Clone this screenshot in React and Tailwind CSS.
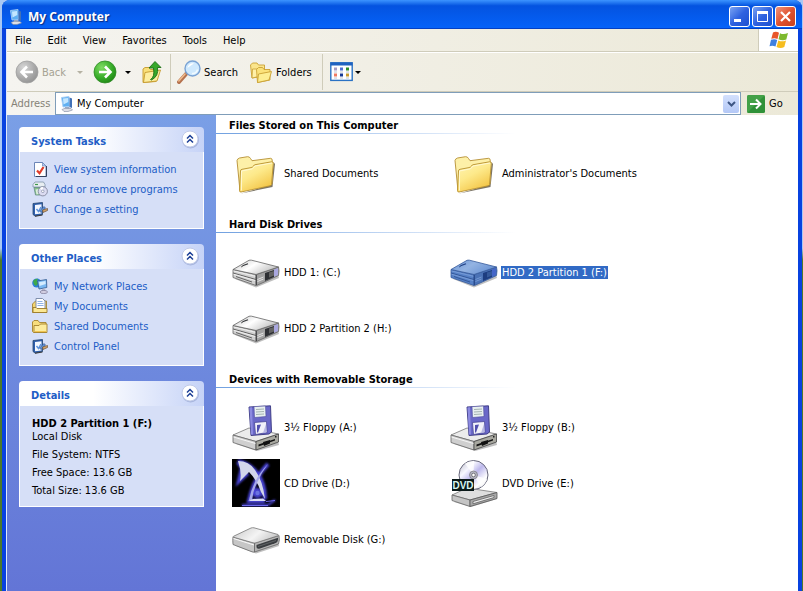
import { useState } from 'react';

const menus = ['File', 'Edit', 'View', 'Favorites', 'Tools', 'Help'];

const groups = [
    {
        title: 'Files Stored on This Computer',
        items: [
            { name: 'Shared Documents', icon: FolderIcon },
            { name: "Administrator's Documents", icon: FolderIcon },
        ],
    },
    {
        title: 'Hard Disk Drives',
        items: [
            { name: 'HDD 1: (C:)', icon: HardDriveIcon },
            { name: 'HDD 2 Partition 1 (F:)', icon: HardDriveIcon },
            { name: 'HDD 2 Partition 2 (H:)', icon: HardDriveIcon },
        ],
    },
    {
        title: 'Devices with Removable Storage',
        items: [
            { name: '3½ Floppy (A:)', icon: FloppyIcon },
            { name: '3½ Floppy (B:)', icon: FloppyIcon },
            { name: 'CD Drive (D:)', icon: CdIcon },
            { name: 'DVD Drive (E:)', icon: DvdIcon },
            { name: 'Removable Disk (G:)', icon: RemovableIcon },
        ],
    },
];

const tasks = [
    { name: 'View system information', icon: InfoIcon },
    { name: 'Add or remove programs', icon: ProgramsIcon },
    { name: 'Change a setting', icon: SettingIcon },
];

const places = [
    { name: 'My Network Places', icon: NetworkIcon },
    { name: 'My Documents', icon: DocumentsIcon },
    { name: 'Shared Documents', icon: SmallFolderIcon },
    { name: 'Control Panel', icon: SettingIcon },
];

/* ---------- 48px icons ---------- */

function FolderIcon() {
    return (
        <svg viewBox="0 0 48 48" className="size-12">
            <defs>
                <linearGradient id="fFront" x1="0" y1="0" x2="0.6" y2="1">
                    <stop offset="0" stopColor="#fff6b8" />
                    <stop offset="0.5" stopColor="#fde98a" />
                    <stop offset="1" stopColor="#f3c546" />
                </linearGradient>
            </defs>
            <path d="M9 44.500 40.500 38 43 15 41.500 13 40 35.500Z" fill="#5b5340" opacity="0.800" />
            <path d="M5 11.500Q5 10 7.500 9L15.500 7.700Q17.500 7.500 18.500 9.500L20 11.700 38.500 9.300Q40 9.300 40.200 11L40 35 8 42Z" fill="#fdf0a8" stroke="#b58f33" strokeWidth="0.9" />
            <path d="M8.500 22Q8.500 20.500 10 20.300L19 18.600Q20.500 18.300 21.500 17L22.500 15.800 39.500 12.800Q41.500 12.500 41.300 14.500L39.500 35.500Q39.400 36.500 38 36.800L9 43Q7.500 43.300 7.500 41.500Z" fill="url(#fFront)" stroke="#b8912f" strokeWidth="0.9" />
            <path d="M9.500 41.500V22L20.500 19.800 23 17 40 14" fill="none" stroke="#fffbe0" strokeWidth="0.8" />
        </svg>
    );
}

function HardDriveIcon({ selected }) {
    const c = selected
        ? { top: '#93b3e2', top2: '#6a93d4', left: '#5580c6', right: '#4a72b6', line: '#35599a', dark: '#1d3d80', tint: '#4566c8', shine: '#7fa2da' }
        : { top: '#ffffff', top2: '#c2c2c2', left: '#cfcfcf', right: '#a2a2a2', line: '#636363', dark: '#2e3034', tint: '#a9a7df', shine: '#f6f6f6' };
    const id = selected ? 'hddSel' : 'hdd';
    return (
        <svg viewBox="0 0 48 48" className="size-12">
            <defs>
                <linearGradient id={id} x1="0" y1="0" x2="1" y2="0.5">
                    <stop offset="0" stopColor={c.top2} />
                    <stop offset="0.5" stopColor={c.top} />
                    <stop offset="1" stopColor={c.top2} />
                </linearGradient>
            </defs>
            <path d="M3 31 24 39.500 47 30 46 26Z" fill="#000" opacity="0.25" />
            <path d="M1 21.500 24 26.500V37.500L1 29.500Z" fill={c.left} stroke={c.line} strokeWidth="0.8" />
            <path d="M24 26.500 46.500 19Q47.500 22 46.500 27.500L24.500 37.500Z" fill={c.right} stroke={c.line} strokeWidth="0.8" />
            <path d="M1 21.500 17 12.300Q18 12 19.500 12.200L46.500 19 24 26.500Z" fill={`url(#${id})`} stroke={c.line} strokeWidth="0.8" />
            <path d="M1 25 24 31.500" stroke={c.line} strokeWidth="1" />
            <path d="M4 28.500 20 34" stroke={c.line} strokeWidth="1" />
            <path d="M1.500 23 23.500 28.300M1.500 26.200 23.500 32.700" stroke={c.shine} strokeWidth="0.8" />
            <path d="M24.300 27V37" stroke={c.dark} strokeWidth="0.8" />
            <path d="M33 25 42 22V29L33 33Z" fill={c.dark} />
            <path d="M37 24.500 42 23V27.500L37 29.500Z" fill={c.line} />
            <path d="M42 21.500 46 20V27L42 28.800Z" fill={c.tint} />
            <path d="M25.500 31.500 31.500 29M25.500 33.500 31.500 31" stroke={c.shine} strokeWidth="0.8" />
            <path d="M10.500 17.800 16 15.800" stroke={c.dark} strokeWidth="1.200" />
            <path d="M9 19 11 18" stroke={c.line} strokeWidth="1" />
        </svg>
    );
}

function FloppyIcon() {
    return (
        <svg viewBox="0 0 48 48" className="size-12">
            <path d="M4 41 25 48 47 42 46 38Z" fill="#000" opacity="0.25" />
            <path d="M1 32 17 25 46.500 31 24 38.500Z" fill="#ececec" stroke="#777" strokeWidth="0.8" />
            <path d="M1 32 24 38.500V47L1 39.500Z" fill="#cfcfcf" stroke="#666" strokeWidth="0.8" />
            <path d="M24 38.500 46.500 31V39L24 47Z" fill="#a8a8a0" stroke="#444" strokeWidth="0.8" />
            <path d="M1.500 34 23.500 40.500" stroke="#fff" strokeWidth="0.8" />
            <path d="M26.500 41.500 43 36V37.500L26.500 43.500Z" fill="#111" />
            <path d="M31 39 38 37V40.500L32 43Z" fill="#111" />
            <rect x="43" y="33" width="1.500" height="1.500" fill="#222" />
            <path d="M17 4 38.500 2.800 39.500 29 37 31 19 32.500Z" fill="#6a68c8" stroke="#35347e" strokeWidth="0.9" />
            <path d="M17.500 4.500 20 4.300 21 31.500 19 31.500Z" fill="#8c8ae0" />
            <path d="M22 3.600 33.500 3 34 13.500 22.500 14.500Z" fill="#e8f0f0" stroke="#4c4a9c" strokeWidth="0.6" />
            <path d="M24 6.500 32 6M24 9 32 8.500M24 11.500 32 11" stroke="#9dabaa" strokeWidth="0.9" />
            <path d="M22.500 19.500 34.500 18.500 35 29.500 23.500 31.500Z" fill="#f1f1fa" stroke="#3d3c8e" strokeWidth="0.7" />
            <path d="M25 22 29 21.500 26 29.500 25 29.500Z" fill="#514fae" />
            <path d="M31 30 34 21 34.500 29.500Z" fill="#b8b8e4" />
        </svg>
    );
}

function CdIcon() {
    return (
        <svg viewBox="0 0 48 48" className="size-12">
            <defs>
                <filter id="cdGlow" x="-20%" y="-20%" width="140%" height="140%">
                    <feGaussianBlur stdDeviation="1.100" />
                </filter>
            </defs>
            <rect width="48" height="48" fill="#000" />
            <g fill="none" stroke="#4a44d8" strokeWidth="4" filter="url(#cdGlow)">
                <path d="M6 2Q18 5 25 14 33 25 33 40" />
                <path d="M6 3 10 9 7 22 16 14" />
                <path d="M36 5Q22 19 17 42H33" />
                <path d="M10 46H36L43 41" strokeWidth="2" />
                <circle cx="25.500" cy="34" r="3" />
            </g>
            <path d="M6 2Q17 2 23 11 31 22 33 40L29 33Q25 21 17 13L8 22Q10 14 6 2Z" fill="#d3d6ea" />
            <path d="M36 5Q28 13 23 23 19 31 17 41H20Q21 32 25 24 29 14 36 5Z" fill="#a5a8e8" />
            <path d="M16 42H34L31 39.500 21 40Z" fill="#dcdef4" />
            <path d="M10 46.500H36M34 42.500 43 41.500" stroke="#6c68ee" strokeWidth="1.200" />
            <circle cx="25.500" cy="34" r="2.200" fill="#6b72e2" />
        </svg>
    );
}

function DvdIcon() {
    return (
        <svg viewBox="0 0 48 48" className="size-12">
            <defs>
                <linearGradient id="disc" x1="0" y1="0" x2="1" y2="1">
                    <stop offset="0" stopColor="#b9b9c8" />
                    <stop offset="0.3" stopColor="#f7f7ff" />
                    <stop offset="0.5" stopColor="#bdb8ec" />
                    <stop offset="0.750" stopColor="#ffffff" />
                    <stop offset="1" stopColor="#a8a8b8" />
                </linearGradient>
            </defs>
            <path d="M4 43 21 48 47 40 46 36Z" fill="#000" opacity="0.25" />
            <path d="M2 36 17 29 47 33.500 20 41Z" fill="#dedede" stroke="#777" strokeWidth="0.8" />
            <path d="M2 36 20 41V47.500L2 41.500Z" fill="#c4c4c4" stroke="#666" strokeWidth="0.8" />
            <path d="M20 41 47 33.500V39.500L20 47.500Z" fill="#a8a8a8" stroke="#555" strokeWidth="0.8" />
            <path d="M23 42.500 44 36.500V38.500L23 44.800Z" fill="#eee" stroke="#555" strokeWidth="0.7" />
            <circle cx="23.500" cy="16" r="14.500" fill="url(#disc)" stroke="#66667a" strokeWidth="1" />
            <path d="M23.500 16 15 4.500A14 14 0 0 1 24 2Z" fill="#fff" opacity="0.8" />
            <path d="M23.500 16 37 20A14 14 0 0 1 31 28Z" fill="#fff" opacity="0.8" />
            <circle cx="23.500" cy="16" r="4" fill="#b4b4c4" stroke="#777" strokeWidth="0.7" />
            <circle cx="23.500" cy="16" r="1.800" fill="#fff" stroke="#555" strokeWidth="0.7" />
            <rect x="2" y="20" width="22" height="12" fill="#0a1818" />
            <text x="13" y="29.500" textAnchor="middle" fontFamily="Liberation Sans, sans-serif" fontWeight="700" fontSize="10" fill="#d7f5f0">DVD</text>
        </svg>
    );
}

function RemovableIcon() {
    return (
        <svg viewBox="0 0 48 48" className="size-12">
            <defs>
                <linearGradient id="rem" x1="0" y1="0" x2="1" y2="0.4">
                    <stop offset="0" stopColor="#c9c9c9" />
                    <stop offset="0.600" stopColor="#f4f4f4" />
                    <stop offset="1" stopColor="#cccccc" />
                </linearGradient>
            </defs>
            <path d="M4 31 24 38.500 47 31 46 27Z" fill="#000" opacity="0.25" />
            <path d="M1 22Q0.500 25 1 29.500L20 36.800Q21.500 37.200 22.500 37V28Z" fill="#c6c6c6" stroke="#666" strokeWidth="0.8" />
            <path d="M22.500 28 47 20.500Q48 25 46.500 29L22.500 37Z" fill="#b4b4b4" stroke="#666" strokeWidth="0.8" />
            <path d="M1.500 21.300 19 13Q20.500 12.500 22 12.800L46 19.500Q47 20.200 46 20.800L24 27.800Q22.500 28.200 21 27.800L1.500 22.200Q0.800 21.700 1.500 21.300Z" fill="url(#rem)" stroke="#777" strokeWidth="0.8" />
            <path d="M24.500 30 46 22.800Q46.500 27 43 28.300L28 33.500Q24.500 34.500 24.500 32Z" fill="#3a3d40" />
            <path d="M26 31.500 44 25.500" stroke="#6a6d70" strokeWidth="0.800" />
            <path d="M1.500 23.500 22 30" stroke="#fff" strokeWidth="0.9" />
        </svg>
    );
}

/* ---------- 16px icons ---------- */

function InfoIcon() {
    return (
        <svg viewBox="0 0 16 16" className="size-4">
            <path d="M2.500 1.500H10.500L14 5V15.500H2.500Z" fill="#fff" stroke="#6c86b8" />
            <path d="M14.500 5V15.500H4" stroke="#33415f" fill="none" />
            <path d="M10.500 1.500V5H14Z" fill="#b7cdf2" stroke="#6c86b8" strokeWidth="0.700" />
            <path d="M5 9.500 7.500 12.300 11.500 6" fill="none" stroke="#e03c2a" strokeWidth="2.200" />
        </svg>
    );
}

function ProgramsIcon() {
    return (
        <svg viewBox="0 0 16 16" className="size-4">
            <path d="M1 3.500 3 1H11.500L13 3.500V6H1Z" fill="#e8eef2" stroke="#7f93a8" strokeWidth="0.800" />
            <path d="M3 3.500H6" stroke="#3e9a4b" strokeWidth="1.200" />
            <path d="M2 6.500H8V14H3.500Z" fill="#86bf86" stroke="#648a86" strokeWidth="0.800" />
            <path d="M3.500 8.500 7 8V13L4.500 13.500Z" fill="#dbeedd" />
            <circle cx="10.800" cy="10.300" r="4.600" fill="#dcdcf2" stroke="#7a7f96" strokeWidth="0.800" />
            <path d="M10.800 10.300 8 7A4.500 4.500 0 0 1 11 6Z" fill="#fff" />
            <circle cx="10.800" cy="10.300" r="1.300" fill="#fff" stroke="#8088a5" strokeWidth="0.700" />
        </svg>
    );
}

function SettingIcon() {
    return (
        <svg viewBox="0 0 16 16" className="size-4">
            <path d="M1 2.500 10.500 1.500V13.500L3 15 1 13.500Z" fill="#2f5fae" stroke="#27466f" strokeWidth="0.800" />
            <path d="M3 4 9.500 3.300V12.500L3 13.300Z" fill="#f4f8ff" />
            <path d="M4.500 8 6.500 10.500 9 6" fill="none" stroke="#5d93dd" strokeWidth="1.500" />
            <path d="M7.500 10 12 5.500 13.500 7 9 11.500Z" fill="#5f93dc" stroke="#22447e" strokeWidth="0.600" />
            <path d="M10.500 9 15.500 7.500V9.500L11 11.500Z" fill="#d3a368" stroke="#69503a" strokeWidth="0.700" />
            <path d="M3 15.300 10.500 14" stroke="#3a3a3a" />
        </svg>
    );
}

function NetworkIcon() {
    return (
        <svg viewBox="0 0 16 16" className="size-4">
            <circle cx="4.800" cy="5" r="4.600" fill="#2c7fd8" />
            <path d="M1 3Q3 0.500 6 0.700L5 3 6.500 5 4 8 2 6.500Z" fill="#3fa94a" />
            <path d="M5.500 3 14.500 1.500 14.800 9.500 7 11Z" fill="#79b8f2" stroke="#31598f" strokeWidth="0.800" />
            <path d="M7 4.200 13.500 3 13.700 6 7.500 8Z" fill="#d4ecff" />
            <path d="M10 11 13 10.500 13.500 13H10Z" fill="#b9b9cc" />
            <ellipse cx="11.800" cy="14" rx="3.700" ry="1.600" fill="#d3cfe2" stroke="#7b7896" strokeWidth="0.700" />
        </svg>
    );
}

function DocumentsIcon() {
    return (
        <svg viewBox="0 0 16 16" className="size-4">
            <path d="M0.500 6 3.500 3H14.500V14.500H0.500Z" fill="#f4d56f" stroke="#9b7a28" strokeWidth="0.800" />
            <path d="M4 0.500H10.500L13 3V12H4Z" fill="#fff" stroke="#7484a4" strokeWidth="0.900" />
            <path d="M5.500 3.500H10.500M5.500 5.500H11.500M5.500 7.500H11.500" stroke="#8fb2e4" />
            <path d="M1 9.500H4L5 10.500H15V14.500H1Z" fill="#fbe793" stroke="#9b7a28" strokeWidth="0.900" />
        </svg>
    );
}

function SmallFolderIcon() {
    return (
        <svg viewBox="0 0 16 16" className="size-4">
            <path d="M0.500 4 2 2.500H6L7.500 4.500H14V14.500H1.500L0.500 13.500Z" fill="#f7dd7c" stroke="#a5822d" strokeWidth="0.900" />
            <path d="M2 7.500H7L8.500 6H15V14.500H2Z" fill="#fdeb9c" stroke="#a5822d" strokeWidth="0.900" />
            <path d="M3 13.500H14" stroke="#f0c450" />
        </svg>
    );
}

function ComputerIcon() {
    return (
        <svg viewBox="0 0 16 16" className="size-4">
            <path d="M2.500 1.500 10 0.500 10.500 10.500 4 11Z" fill="#5fb0f2" stroke="#a7cdf4" strokeWidth="0.900" />
            <path d="M4 2.500 9 2 9.300 6 4.500 8.500Z" fill="#c3e6ff" />
            <path d="M10.500 1.500 13 2.500V12L10.500 11Z" fill="#4271b6" />
            <path d="M6 11H10.500V13H6Z" fill="#9cadc8" />
            <path d="M3 13.500 6 12.300 12 12.500 13.500 14 9 15.500H5Z" fill="#dedfe6" stroke="#7e88a0" strokeWidth="0.600" />
        </svg>
    );
}

/* ---------- toolbar icons ---------- */

function ArrowCircle({ back }) {
    return (
        <svg viewBox="0 0 24 24" className="size-6">
            <defs>
                <radialGradient id={back ? 'cBack' : 'cFwd'} cx="0.35" cy="0.3" r="0.8">
                    <stop offset="0" stopColor={back ? '#d6d6d6' : '#7fdc63'} />
                    <stop offset="0.600" stopColor={back ? '#a9a9a9' : '#36ab28'} />
                    <stop offset="1" stopColor={back ? '#8f8f8f' : '#1c8113'} />
                </radialGradient>
            </defs>
            <circle cx="12" cy="12" r="11" fill={back ? 'url(#cBack)' : 'url(#cFwd)'} stroke={back ? '#a0a0a0' : '#2f8a25'} strokeWidth="0.800" />
            <path
                d={back ? 'M18 12H7M12 6.500 6.500 12 12 17.500' : 'M6 12H17M12 6.500 17.500 12 12 17.500'}
                fill="none" stroke="#fff" strokeWidth="2.600"
            />
        </svg>
    );
}

function UpFolderIcon() {
    return (
        <svg viewBox="0 0 20 24" className="h-6 w-5">
            <path d="M1 9 3 7.500H7L8.500 9.500H14V21.500L1 22.500Z" fill="#f9e07a" stroke="#c59a2c" strokeWidth="0.900" />
            <path d="M3 12.500 18.500 10 15 21 1.500 22.500Z" fill="#fdeea0" stroke="#c59a2c" strokeWidth="0.900" />
            <path d="M8.500 19.500Q13 17 11.500 8H7L13 1.500 19 7.500H15.500Q17 16 9.500 20Z" fill="#37a82b" stroke="#1c6f15" strokeWidth="0.900" />
        </svg>
    );
}

function SearchIcon() {
    return (
        <svg viewBox="0 0 24 24" className="size-6">
            <path d="M2 22 9.500 13.500" stroke="#b5724e" strokeWidth="4" strokeLinecap="round" />
            <path d="M1.800 21 8 14" stroke="#f0bb8c" strokeWidth="1.600" strokeLinecap="round" />
            <circle cx="15.500" cy="8.500" r="7.500" fill="#cfe9fd" stroke="#7aa3d4" strokeWidth="1.400" />
            <path d="M10.500 8A5 5 0 0 1 17 3.500Q13 6 10.500 8Z" fill="#fff" />
            <path d="M20.500 9.500A5 5 0 0 1 15 13.500" stroke="#f2fbff" strokeWidth="1.500" fill="none" />
        </svg>
    );
}

function FoldersIcon() {
    return (
        <svg viewBox="0 0 24 24" className="size-6">
            <path d="M1.500 5 3.500 3H8L9.500 5H15.500V16L3 18Z" fill="#fbe58c" stroke="#c9a033" strokeWidth="0.900" />
            <path d="M3.500 9H14L12 16 3 18Z" fill="#fff0a8" stroke="#c9a033" strokeWidth="0.800" />
            <path d="M7.500 9.500 9.500 7.500H13.500L15 9.500H21V20L8.500 22.500Z" fill="#fbe27a" stroke="#c9a033" strokeWidth="0.900" />
            <path d="M9.500 14 22.500 11.500 20 20 8.500 22.500Z" fill="#fdee92" stroke="#c9a033" strokeWidth="0.900" />
        </svg>
    );
}

function ViewsIcon() {
    return (
        <svg viewBox="0 0 24 20" className="h-5 w-6">
            <rect x="0.800" y="0.800" width="21.400" height="17.600" fill="#fff" stroke="#2a72c4" strokeWidth="1.400" />
            <rect x="0.500" y="0.500" width="22" height="3" fill="#1f62c0" />
            <path d="M4 5.500H7V8.500H4Z" fill="#a69cc4" />
            <path d="M10 5.500H13V8.500H10Z" fill="#4a6fd6" />
            <path d="M16 5.500H19V8.500H16Z" fill="#2c8d28" />
            <path d="M4 11.500H7V14.500H4Z" fill="#ee7a62" />
            <path d="M10 11.500H13V14.500H10Z" fill="#163a94" />
            <path d="M16 11.500H19V14.500H16Z" fill="#c99a2c" />
            <path d="M4 10H7M10 10H13M16 10H19M4 16H7M10 16H13M16 16H19" stroke="#a9b8c8" strokeWidth="0.800" />
        </svg>
    );
}

function WindowsFlag() {
    return (
        <svg viewBox="0 0 20 18" className="h-[18px] w-5">
            <path d="M4 1.500Q7 0 10 1.800L8.500 8Q5.500 6.500 2.300 7.800Z" fill="#e8562a" />
            <path d="M11 2.200Q14.500 4 19 2L17.300 8.500Q13.500 10 9.500 8.300Z" fill="#7dba2e" />
            <path d="M2 8.800Q5.500 7.500 8.200 9L6.500 15.500Q3.500 14 0.500 15.200Z" fill="#3f7fe0" />
            <path d="M9.300 9.500Q13 11.200 17 9.500L15.300 16Q11.500 18 7.500 16Z" fill="#f6bd1f" />
        </svg>
    );
}

function Caret({ className = 'text-black' }) {
    return (
        <svg viewBox="0 0 6 3" className={`h-[3px] w-1.5 ${className}`}>
            <path d="M0 0H6L3 3Z" fill="currentColor" />
        </svg>
    );
}

/* ---------- layout parts ---------- */

function WindowButton({ label, close, children }) {
    return (
        <button
            aria-label={label}
            className={`size-[21px] rounded-[3px] border border-white flex items-center justify-center ${close ? 'bg-linear-to-br from-[#f0937a] via-[#e0522f] to-[#c8401c]' : 'bg-linear-to-br from-[#7ba2f2] via-[#2f62e0] to-[#1c4fd0]'}`}
        >
            <svg viewBox="0 0 19 19" className="size-[19px]" fill="none" stroke="#fff">{children}</svg>
        </button>
    );
}

function Panel({ title, children }) {
    const [open, setOpen] = useState(true);
    return (
        <section>
            <div className="flex h-[25px] items-center justify-between rounded-t-[4px] bg-linear-to-r from-white from-40% to-[#c6d3f7] pl-3 pr-1">
                <h2 className="pt-1 font-bold text-[#215dc6]">{title}</h2>
                <button aria-label={`Toggle ${title}`} onClick={() => setOpen(!open)}>
                    <svg viewBox="0 0 20 20" className="size-5">
                        <circle cx="10.500" cy="10" r="8.500" fill="#8f9fcb" opacity="0.600" />
                        <circle cx="10" cy="9" r="8" fill="#fff" stroke="#c0cae8" />
                        <path d="M7 8.500 10 5.500 13 8.500M7 12.500 10 9.500 13 12.500" fill="none" stroke="#1c3f96" strokeWidth="1.500" />
                    </svg>
                </button>
            </div>
            {open && <div className="border border-t-0 border-white bg-[#d6dff7]">{children}</div>}
        </section>
    );
}

function LinkList({ links }) {
    return (
        <ul className="px-3 pb-[9px] pt-[7px]">
            {links.map(({ name, icon: Icon }) => (
                <li key={name}>
                    <a href="#" className="flex h-5 items-center gap-[6px] text-[#215dc6] hover:underline">
                        <Icon />
                        {name}
                    </a>
                </li>
            ))}
        </ul>
    );
}

export default function App() {
    const [selected, setSelected] = useState('HDD 2 Partition 1 (F:)');
    const [address, setAddress] = useState('My Computer');

    return (
        <div className="flex min-h-screen bg-linear-to-b from-[#a9c8f4] from-42% to-[#4d7a2a] to-44% pl-0.5 pr-px font-['DejaVu_Sans_Condensed','DejaVu_Sans',sans-serif] text-[11px] leading-[13px] text-black">
            <div className="flex flex-1 flex-col rounded-t-lg bg-[#0842e0]">

                {/* TITLE BAR */}
                <header className="flex h-[29px] items-center justify-between rounded-t-lg bg-linear-to-b from-[#3c94ff] via-[#0453e0] via-20% to-[#0563fa] pl-1.5 pr-1.5 pt-1 shadow-[inset_0_-1px_0_#0340c4]">
                    <div className="flex items-center gap-1">
                        <ComputerIcon />
                        <h1 className="font-['Open_Sans',sans-serif] text-[12px] font-bold text-white [text-shadow:1px_1px_1px_#0a2a80]">My Computer</h1>
                    </div>
                    <div className="flex gap-0.5">
                        <WindowButton label="Minimize"><path d="M4 13.500H11" strokeWidth="3" /></WindowButton>
                        <WindowButton label="Maximize"><path d="M4.500 5V14.500H14.500V5" /><path d="M4 5.500H15" strokeWidth="3" /></WindowButton>
                        <WindowButton label="Close" close><path d="M5 5 14 14M14 5 5 14" strokeWidth="2.200" /></WindowButton>
                    </div>
                </header>

                <div className="ml-1 mr-1 flex flex-1 flex-col border-l border-[#dfe8fb]">
                    {/* MENU BAR */}
                    <nav className="flex h-[23px] border-b border-[#cfccba] bg-linear-to-r from-[#f5f4f0] to-[#ece9d8]">
                        <div className="flex flex-1 items-center gap-4 pl-2">
                            {menus.map(m => <button key={m}>{m}</button>)}
                        </div>
                        <div className="flex w-10 items-center justify-center border-l border-[#cfccba] bg-white">
                            <WindowsFlag />
                        </div>
                    </nav>

                    {/* TOOLBAR */}
                    <div className="flex h-10 items-center border-b border-[#cfccba] border-t border-t-white bg-linear-to-r from-[#f5f4f0] to-[#ece9d8] pl-2">
                        <button className="flex w-[74px] items-center gap-[3px] text-[#a5a293]" disabled>
                            <ArrowCircle back />
                            <span className="flex-1 text-left">Back</span>
                            <Caret className="mr-1.5 text-[#b5b2a3]" />
                        </button>
                        <button className="flex w-[53px] items-center gap-2 pl-1" aria-label="Forward">
                            <ArrowCircle />
                            <Caret />
                        </button>
                        <button className="pr-2" aria-label="Up"><UpFolderIcon /></button>
                        <div className="h-9 w-px bg-[#cfccba]" />
                        <button className="ml-1.5 flex w-[72px] items-center gap-[3px]"><SearchIcon />Search</button>
                        <button className="flex w-[73px] items-center gap-[3px]"><FoldersIcon />Folders</button>
                        <div className="h-9 w-px bg-[#cfccba]" />
                        <button className="ml-[7px] flex items-center gap-px" aria-label="Views"><ViewsIcon /><Caret /></button>
                    </div>

                    {/* ADDRESS BAR */}
                    <div className="flex h-[23px] items-center bg-linear-to-r from-[#f5f4f0] to-[#ece9d8] pl-1">
                        <label htmlFor="address" className="w-11 text-[#858277]">Address</label>
                        <div className="flex h-[23px] flex-1 items-center border border-[#7f9db9] bg-white pl-[3px] pr-px">
                            <ComputerIcon />
                            <input
                                id="address"
                                type="text"
                                value={address}
                                onChange={(e) => setAddress(e.target.value)}
                                className="ml-0.5 min-w-0 flex-1 outline-none"
                            />
                            <button aria-label="Address list" className="flex h-[18px] w-4 items-center justify-center rounded-[2px] bg-linear-to-b from-[#d3e0fd] to-[#b4c8f6]">
                                <svg viewBox="0 0 9 6" className="h-1.5 w-[9px]"><path d="M1 1 4.500 4.500 8 1" fill="none" stroke="#3e5684" strokeWidth="2" /></svg>
                            </button>
                        </div>
                        <button className="ml-1.5 flex w-[51px] items-center gap-1">
                            <svg viewBox="0 0 18 18" className="size-[18px]">
                                <rect width="18" height="18" rx="1.500" fill="#2f9138" />
                                <path d="M0 18V1.500Q0 0 1.500 0H18Z" fill="#58b158" opacity="0.500" />
                                <path d="M3 9H13M9 4.500 13.500 9 9 13.500" fill="none" stroke="#fff" strokeWidth="2" />
                            </svg>
                            Go
                        </button>
                    </div>

                    <div className="flex flex-1">
                        {/* TASK PANE */}
                        <aside className="flex w-[209px] shrink-0 flex-col gap-[15px] bg-linear-to-b from-[#7a9fe6] to-[#6375d6] p-3">
                            <Panel title="System Tasks"><LinkList links={tasks} /></Panel>
                            <Panel title="Other Places"><LinkList links={places} /></Panel>
                            <Panel title="Details">
                                <div className="px-3 pb-1.5 pt-[11px]">
                                    <p className="font-bold">{selected}</p>
                                    <p className="mb-[3px]">Local Disk</p>
                                    <p className="leading-[18px]">File System: NTFS</p>
                                    <p className="leading-[18px]">Free Space: 13.6 GB</p>
                                    <p className="leading-[18px]">Total Size: 13.6 GB</p>
                                </div>
                            </Panel>
                        </aside>

                        {/* FILE LIST */}
                        <main className="flex flex-1 flex-col gap-[13px] bg-white">
                            {groups.map(group => (
                                <section key={group.title}>
                                    <h2 className="h-[18px] pl-[13px] pt-1 font-bold">{group.title}</h2>
                                    <div className="h-px w-[300px] bg-linear-to-r from-[#70a0e0] to-white" />
                                    <div className="mt-[11px] grid grid-cols-[repeat(auto-fill,218px)] pl-4">
                                        {group.items.map(({ name, icon: Icon }) => (
                                            <button key={name} onClick={() => setSelected(name)} className="flex h-14 items-center gap-[3px] text-left">
                                                <Icon selected={selected === name} />
                                                <span className={selected === name ? 'bg-[#316ac5] px-px text-white' : 'px-px'}>{name}</span>
                                            </button>
                                        ))}
                                    </div>
                                </section>
                            ))}
                        </main>
                    </div>
                </div>
            </div>
        </div>
    );
}
